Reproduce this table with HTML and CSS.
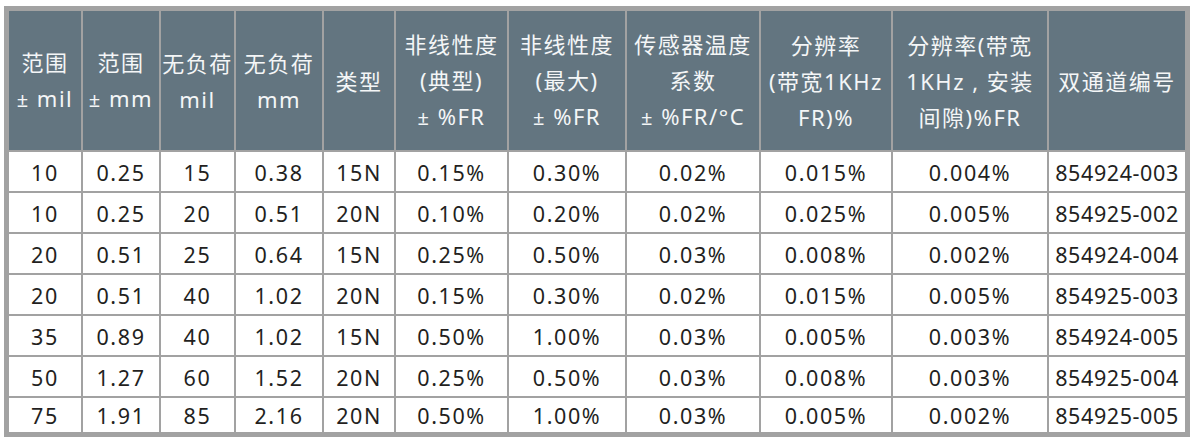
FILE: index.html
```html
<!DOCTYPE html>
<html lang="zh">
<head>
<meta charset="utf-8">
<title>规格表</title>
<link rel="stylesheet" href="styles.css">
</head>
<body>
<table class="spec">
  <colgroup>
    <col class="c1"><col class="c2"><col class="c3"><col class="c4"><col class="c5"><col class="c6"><col class="c7"><col class="c8"><col class="c9"><col class="c10"><col class="c11">
  </colgroup>
  <thead>
    <tr>
      <th>范围<br><span class="pm">±</span> mil</th>
      <th>范围<br><span class="pm">±</span> mm</th>
      <th>无负荷<br>mil</th>
      <th>无负荷<br>mm</th>
      <th>类型</th>
      <th>非线性度<br>(典型)<br><span class="pm">±</span> %FR</th>
      <th>非线性度<br>(最大)<br><span class="pm">±</span> %FR</th>
      <th>传感器温度<br>系数<br><span class="pm">±</span> %FR/°C</th>
      <th>分辨率<br>(带宽1KHz<br>FR)%</th>
      <th>分辨率(带宽<br>1KHz , 安装<br>间隙)%FR</th>
      <th>双通道编号</th>
    </tr>
  </thead>
  <tbody>
    <tr><td>10</td><td>0.25</td><td>15</td><td>0.38</td><td>15N</td><td>0.15%</td><td>0.30%</td><td>0.02%</td><td>0.015%</td><td>0.004%</td><td class="pn">854924-003</td></tr>
    <tr><td>10</td><td>0.25</td><td>20</td><td>0.51</td><td>20N</td><td>0.10%</td><td>0.20%</td><td>0.02%</td><td>0.025%</td><td>0.005%</td><td class="pn">854925-002</td></tr>
    <tr><td>20</td><td>0.51</td><td>25</td><td>0.64</td><td>15N</td><td>0.25%</td><td>0.50%</td><td>0.03%</td><td>0.008%</td><td>0.002%</td><td class="pn">854924-004</td></tr>
    <tr><td>20</td><td>0.51</td><td>40</td><td>1.02</td><td>20N</td><td>0.15%</td><td>0.30%</td><td>0.02%</td><td>0.015%</td><td>0.005%</td><td class="pn">854925-003</td></tr>
    <tr><td>35</td><td>0.89</td><td>40</td><td>1.02</td><td>15N</td><td>0.50%</td><td>1.00%</td><td>0.03%</td><td>0.005%</td><td>0.003%</td><td class="pn">854924-005</td></tr>
    <tr><td>50</td><td>1.27</td><td>60</td><td>1.52</td><td>20N</td><td>0.25%</td><td>0.50%</td><td>0.03%</td><td>0.008%</td><td>0.003%</td><td class="pn">854925-004</td></tr>
    <tr class="last"><td>75</td><td>1.91</td><td>85</td><td>2.16</td><td>20N</td><td>0.50%</td><td>1.00%</td><td>0.03%</td><td>0.005%</td><td>0.002%</td><td class="pn">854925-005</td></tr>
  </tbody>
</table>
</body>
</html>
```

FILE: styles.css
```css
html, body {
  margin: 0;
  padding: 0;
  background: #ffffff;
}

body {
  padding: 6px 0 0 4px;
  font-family: "Noto Sans", "Noto Sans CJK SC", sans-serif;
}

.spec {
  table-layout: fixed;
  width: 1186px;
  border-collapse: separate;
  border-spacing: 0;
  border: 5px solid #a2a2a2;
}

.c1 { width: 74px; }
.c2 { width: 78px; }
.c3 { width: 75px; }
.c4 { width: 88px; }
.c5 { width: 72px; }
.c6 { width: 113px; }
.c7 { width: 118px; }
.c8 { width: 134px; }
.c9 { width: 132px; }
.c10 { width: 156px; }
.c11 { width: 136px; }

.spec th,
.spec td {
  box-sizing: border-box;
  padding: 0;
  border-right: 2px solid #a2a2a2;
  border-bottom: 2px solid #a2a2a2;
  text-align: center;
  white-space: nowrap;
  overflow: hidden;
}

.spec th:last-child,
.spec td:last-child {
  border-right: none;
}

.spec th {
  height: 141px;
  background: #637580;
  color: #f4f6f7;
  font-weight: normal;
  font-size: 22px;
  line-height: 36px;
  letter-spacing: 1.5px;
  vertical-align: middle;
}

.pm {
  font-size: 20px;
}

.spec td {
  height: 41px;
  color: #231f1e;
  font-size: 21.5px;
  letter-spacing: 1.6px;
  line-height: 24px;
  padding-top: 3px;
}

.spec td.pn {
  letter-spacing: 0.6px;
}

.spec tr.last td {
  height: 34px;
  border-bottom: none;
  padding-top: 2px;
}
```
